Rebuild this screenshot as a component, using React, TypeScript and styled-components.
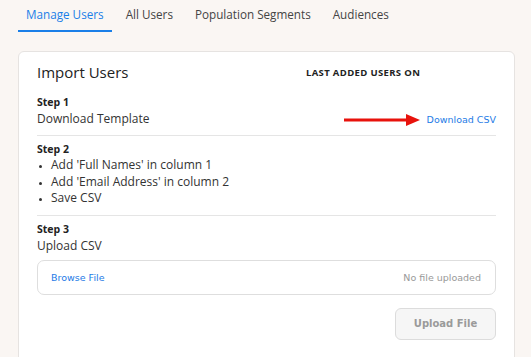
import React from "react";
import styled, { createGlobalStyle } from "styled-components";

const Global = createGlobalStyle`
  html, body { margin: 0; padding: 0; background: #faf6f3; }
  body { font-family: "Open Sans", "Noto Sans", sans-serif; color: #333; }
  * { box-sizing: border-box; }
`;

const Page = styled.div`
  padding: 0 16px 0 18px;
`;

const Tabs = styled.nav`
  display: flex;
  gap: 6px;
  height: 32px;
`;

const Tab = styled.div<{ $active?: boolean }>`
  padding: 6px 8px 0;
  font-size: 11.7px;
  line-height: 16px;
  color: ${(p) => (p.$active ? "#1a7fe8" : "#444")};
  border-bottom: 2px solid ${(p) => (p.$active ? "#1a7fe8" : "transparent")};
`;

const Card = styled.section`
  margin-top: 19px;
  background: #fff;
  border: 1px solid #e6e3e1;
  border-radius: 6px;
  padding: 10px 18px 40px;
`;

const Header = styled.div`
  display: grid;
  grid-template-columns: 1fr 190px;
  align-items: center;
  height: 20px;
  margin-bottom: 7px;
`;

const Title = styled.h1`
  margin: 0;
  font-size: 15px;
  font-weight: 400;
  color: #222;
`;

const LastAdded = styled.div`
  font-size: 9.5px;
  font-weight: 700;
  color: #222;
  letter-spacing: 0.35px;
`;

const Step = styled.div<{ $divider?: boolean }>`
  padding: 6px 0 8px;
  border-bottom: ${(p) => (p.$divider ? "1px solid #e5e5e5" : "none")};
`;

const StepLabel = styled.div`
  font-size: 10.5px;
  font-weight: 700;
  line-height: 15px;
  color: #222;
`;

const StepRow = styled.div`
  display: flex;
  align-items: center;
  justify-content: space-between;
  height: 17px;
`;

const StepText = styled.div`
  font-size: 12px;
  line-height: 17px;
  color: #333;
`;

const LinkGroup = styled.div`
  display: flex;
  align-items: center;
  gap: 7px;
  margin-top: 2px;
`;

const Link = styled.span`
  font-family: "DejaVu Sans", Verdana, sans-serif;
  font-size: 9.5px;
  color: #1e7be6;
`;

const Bullets = styled.ul`
  margin: 0;
  padding: 0 0 0 14px;
  list-style: none;
`;

const Bullet = styled.li`
  position: relative;
  font-size: 12px;
  line-height: 16.5px;
  color: #333;
  &::before {
    content: "";
    position: absolute;
    left: -12px;
    top: 8px;
    width: 3px;
    height: 3px;
    border-radius: 50%;
    background: #333;
  }
`;

const FileBox = styled.div`
  margin-top: 6px;
  height: 35px;
  border: 1px solid #dedede;
  border-radius: 7px;
  display: flex;
  align-items: center;
  justify-content: space-between;
  padding: 0 14px 0 13px;
`;

const Muted = styled.span`
  font-family: "DejaVu Sans", Verdana, sans-serif;
  font-size: 9.5px;
  color: #999;
`;

const Actions = styled.div`
  display: flex;
  justify-content: flex-end;
  margin-top: 13px;
`;

const Button = styled.button`
  width: 101px;
  height: 32px;
  border: 1px solid #dcdcdc;
  border-radius: 6px;
  background: #f6f6f6;
  color: #9a9a9a;
  font-family: "DejaVu Sans", Verdana, sans-serif;
  font-weight: 700;
  font-size: 10px;
  padding: 0;
`;

const Arrow = () => (
  <svg width="76" height="12" viewBox="0 0 76 12">
    <rect x="0" y="4.5" width="64" height="3" fill="#e8120c" />
    <polygon points="62,0 76,6 62,12" fill="#e8120c" />
  </svg>
);

export default function App() {
  return (
    <>
      <Global />
      <Page>
        <Tabs>
          <Tab $active>Manage Users</Tab>
          <Tab>All Users</Tab>
          <Tab>Population Segments</Tab>
          <Tab>Audiences</Tab>
        </Tabs>
        <Card>
          <Header>
            <Title>Import Users</Title>
            <LastAdded>LAST ADDED USERS ON</LastAdded>
          </Header>
          <Step $divider>
            <StepLabel>Step 1</StepLabel>
            <StepRow>
              <StepText>Download Template</StepText>
              <LinkGroup>
                <Arrow />
                <Link>Download CSV</Link>
              </LinkGroup>
            </StepRow>
          </Step>
          <Step $divider>
            <StepLabel>Step 2</StepLabel>
            <Bullets>
              <Bullet>Add 'Full Names' in column 1</Bullet>
              <Bullet>Add 'Email Address' in column 2</Bullet>
              <Bullet>Save CSV</Bullet>
            </Bullets>
          </Step>
          <Step>
            <StepLabel>Step 3</StepLabel>
            <StepText>Upload CSV</StepText>
            <FileBox>
              <Link>Browse File</Link>
              <Muted>No file uploaded</Muted>
            </FileBox>
            <Actions>
              <Button>Upload File</Button>
            </Actions>
          </Step>
        </Card>
      </Page>
    </>
  );
}
